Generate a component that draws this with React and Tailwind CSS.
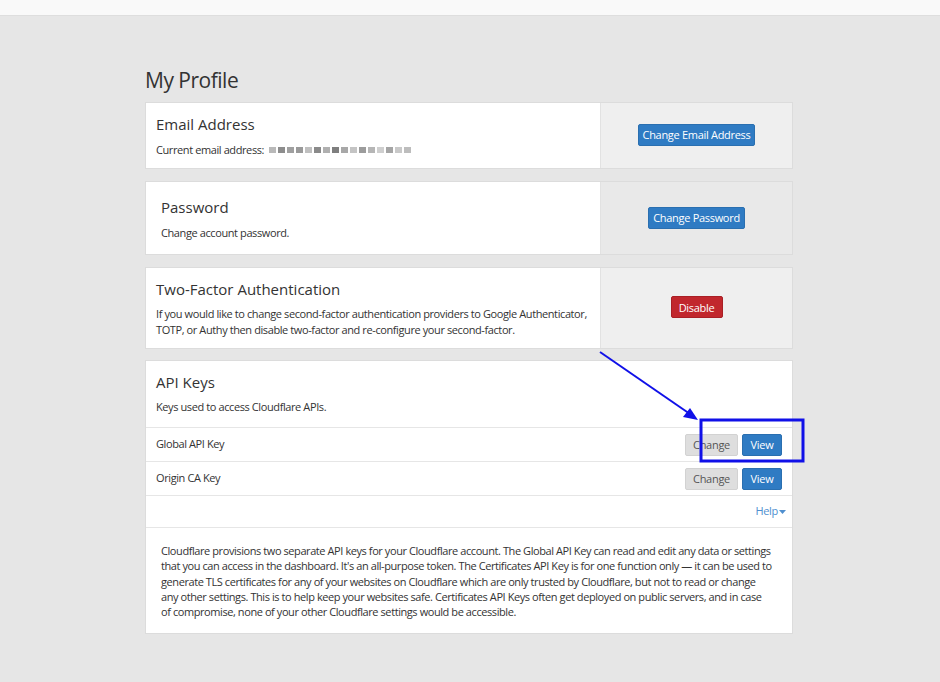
import React from 'react';

const font = { fontFamily: '"Open Sans", "Liberation Sans", sans-serif' };

function BlueButton({ children, className = '' }) {
  return (
    <button
      type="button"
      className={`bg-[#2f7bc3] border border-[#2a6fb0] text-white text-[11px] tracking-[-0.3px] leading-none rounded-[2px] ${className}`}
    >
      {children}
    </button>
  );
}

const blur = ['#b9b9b9', '#8d8d8d', '#a0a0a0', '#9a9a9a', '#c0c0c0', '#8a8a8a', '#b0b0b0', '#7f7f7f', '#a8a8a8', '#c4c4c4', '#9c9c9c', '#b6b6b6', '#cfcfcf', '#a5a5a5', '#c9c9c9', '#bdbdbd'];

export default function App() {
  return (
    <div className="min-h-[682px] bg-[#e6e6e6] text-[#333]" style={font}>
      <div className="h-[16px] bg-[#f9f9f9] border-b border-[#dedede]" />
      <div className="relative w-[648px] ml-[145px]">
        <h1 className="pt-[51px] pb-[8px] text-[21px] leading-[27px] text-[#333] tracking-[-0.5px]">My Profile</h1>

        {/* Email */}
        <div className="flex bg-white border border-[#dcdcdc] h-[67px]">
          <div className="w-[454px] pl-[10px] pt-[11px]">
            <div className="text-[15px] leading-[20px]">Email Address</div>
            <div className="mt-[8px] text-[11px] tracking-[-0.4px] leading-[15px] flex items-center">
              Current email address:
              <span className="ml-[5px] flex gap-[2px] items-center">
                {blur.map((c, i) => (
                  <span key={i} className="block w-[7px] h-[6px]" style={{ background: c }} />
                ))}
              </span>
            </div>
          </div>
          <div className="flex-1 bg-[#efefef] border-l border-[#e2e2e2] flex items-center justify-center">
            <BlueButton className="w-[117px] h-[22px] -mt-[2px]">Change Email Address</BlueButton>
          </div>
        </div>

        {/* Password */}
        <div className="flex bg-white border border-[#dcdcdc] h-[74px] mt-[12px]">
          <div className="w-[454px] pl-[15px] pt-[15px]">
            <div className="text-[15px] leading-[20px]">Password</div>
            <div className="mt-[8px] text-[11px] tracking-[-0.4px] leading-[15px]">Change account password.</div>
          </div>
          <div className="flex-1 bg-[#e9e9e9] border-l border-[#e2e2e2] flex items-center justify-center">
            <BlueButton className="w-[97px] h-[22px] -mt-[1px]">Change Password</BlueButton>
          </div>
        </div>

        {/* Two-factor */}
        <div className="flex bg-white border border-[#dcdcdc] h-[82px] mt-[12px]">
          <div className="w-[454px] pl-[10px] pr-[6px] pt-[11px]">
            <div className="text-[15px] leading-[20px]">Two-Factor Authentication</div>
            <div className="mt-[7px] text-[11px] tracking-[-0.4px] leading-[16px]">
              If you would like to change second-factor authentication providers to Google Authenticator, TOTP, or Authy then disable two-factor and re-configure your second-factor.
            </div>
          </div>
          <div className="flex-1 bg-[#efefef] border-l border-[#e2e2e2] flex items-center justify-center">
            <button
              type="button"
              className="bg-[#c1272d] border border-[#a91f25] text-white text-[11px] tracking-[-0.3px] leading-none rounded-[2px] w-[52px] h-[22px] -mt-[2px]"
            >
              Disable
            </button>
          </div>
        </div>

        {/* API keys */}
        <div className="bg-white border border-[#dcdcdc] mt-[11px] h-[274px]">
          <div className="pl-[10px] pt-[11px] pb-[13px] border-b border-[#e6e6e6]">
            <div className="text-[15px] leading-[20px]">API Keys</div>
            <div className="mt-[7px] text-[11px] tracking-[-0.4px] leading-[15px]">Keys used to access Cloudflare APIs.</div>
          </div>
          {['Global API Key', 'Origin CA Key'].map((k) => (
            <div key={k} className="flex items-center h-[34px] pl-[10px] pr-[10px] border-b border-[#e6e6e6]">
              <div className="flex-1 text-[11px] tracking-[-0.4px]">{k}</div>
              <button type="button" className="bg-[#dedede] border border-[#d2d2d2] text-[#555] text-[11px] tracking-[-0.3px] leading-none rounded-[2px] w-[53px] h-[22px]">
                Change
              </button>
              <BlueButton className="w-[40px] h-[22px] ml-[4px]">View</BlueButton>
            </div>
          ))}
          <div className="h-[32px] flex items-center justify-end pr-[6px] border-b border-[#e6e6e6]">
            <span className="text-[11px] tracking-[-0.3px] text-[#4f8fcf] flex items-center">
              Help
              <svg width="7" height="4" viewBox="0 0 7 4" className="ml-[1px] mt-[1px]">
                <path d="M0 0 L7 0 L3.5 4 Z" fill="#4f8fcf" />
              </svg>
            </span>
          </div>
          <p className="pl-[15px] pr-[6px] pt-[15px] text-[11px] leading-[15.3px] tracking-[-0.42px]">
            Cloudflare provisions two separate API keys for your Cloudflare account. The Global API Key can read and edit any data or settings<br />
            that you can access in the dashboard. It's an all-purpose token. The Certificates API Key is for one function only — it can be used to<br />
            generate TLS certificates for any of your websites on Cloudflare which are only trusted by Cloudflare, but not to read or change<br />
            any other settings. This is to help keep your websites safe. Certificates API Keys often get deployed on public servers, and in case<br />
            of compromise, none of your other Cloudflare settings would be accessible.
          </p>
        </div>

        {/* annotation overlay */}
        <svg className="absolute left-0 top-0 pointer-events-none" width="700" height="500" viewBox="145 16 700 500" style={{ overflow: 'visible' }}>
          <line x1="600" y1="352" x2="690" y2="414" stroke="#1010e8" strokeWidth="2" />
          <path d="M698 420 L683 417 L690 408 Z" fill="#1010e8" />
          <rect x="701" y="420" width="102" height="41" fill="none" stroke="#1010e8" strokeWidth="3" />
        </svg>
      </div>
    </div>
  );
}
